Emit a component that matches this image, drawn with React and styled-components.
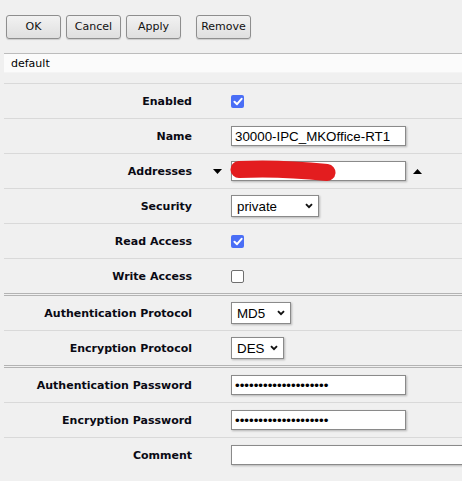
import React from "react";
import styled, { createGlobalStyle } from "styled-components";

const Global = createGlobalStyle`
  html, body { margin: 0; padding: 0; background: #f0f0f0; overflow: hidden; }
  body { font-family: "DejaVu Sans", Verdana, sans-serif; font-size: 11px; color: #000; }
`;

const Page = styled.div`
  width: 462px;
  height: 481px;
  overflow: hidden;
  background: #f0f0f0;
`;

const Toolbar = styled.div`
  display: flex;
  align-items: center;
  gap: 5px;
  padding: 8px 0 0 6px;
  height: 45px;
  box-sizing: border-box;
`;

const Button = styled.button`
  width: 55px;
  height: 24px;
  margin-left: ${(p) => (p.$spaced ? "10px" : "0")};
  box-sizing: border-box;
  border: 1px solid #8e8e8e;
  border-radius: 3px;
  background: linear-gradient(#f2f2f2, #dfdfdf);
  box-shadow: 0 1px 1px rgba(0, 0, 0, 0.15);
  font-family: "DejaVu Sans", Verdana, sans-serif;
  font-size: 11px;
  color: #111;
  padding: 0;
`;

const Band = styled.div`
  margin: 8px 0 0 4px;
  height: 20px;
  border-top: 1px solid #bcbcbc;
  border-bottom: 1px solid #f4f4f4;
  background: #fbfbfb;
  display: flex;
  align-items: center;
  padding-left: 7px;
  box-sizing: border-box;
  font-size: 11px;
`;

const Form = styled.div`
  margin: 10px 0 0 4px;
`;

const Row = styled.div`
  display: flex;
  align-items: center;
  height: 34px;
  border-top: ${(p) => (p.$group ? "3px double #b3b3b3" : "1px solid #d9d9d9")};
`;

const Label = styled.div`
  width: 188px;
  text-align: right;
  font-weight: bold;
  font-size: 11px;
  color: #0a0a14;
  flex: none;
`;

const Pre = styled.div`
  width: 39px;
  flex: none;
  display: flex;
  align-items: center;
  padding-left: 21px;
  box-sizing: border-box;
`;

const Check = styled.span`
  width: 13px;
  height: 13px;
  box-sizing: border-box;
  border-radius: 2px;
  display: inline-flex;
  align-items: center;
  justify-content: center;
  background: ${(p) => (p.$on ? "#4a6ef6" : "#fff")};
  border: ${(p) => (p.$on ? "none" : "1px solid #6f6f6f")};
`;

const Input = styled.input`
  width: ${(p) => p.$w || 175}px;
  height: 20px;
  box-sizing: border-box;
  border: 1px solid #8a8a8a;
  box-shadow: 1px 1px 2px rgba(0, 0, 0, 0.25);
  background: #fff;
  font-family: "Liberation Sans", Arial, sans-serif;
  font-size: 13.33px;
  color: #000;
  padding: 0 0 0 3px;
  margin: 0;
  outline: none;
  flex: none;
`;

const InputWrap = styled.div`
  position: relative;
  flex: none;
  display: flex;
`;

const Scribble = styled.svg`
  position: absolute;
  left: -2px;
  top: -2px;
  pointer-events: none;
`;

const After = styled.div`
  margin-left: 7px;
  display: flex;
  align-items: center;
`;

const SelectBox = styled.div`
  width: ${(p) => p.$w}px;
  height: 22px;
  box-sizing: border-box;
  border: 1px solid #8a8a8a;
  box-shadow: 1px 1px 2px rgba(0, 0, 0, 0.25);
  background: #fff;
  display: flex;
  align-items: center;
  justify-content: space-between;
  padding: 0 5px 0 5px;
  font-family: "Liberation Sans", Arial, sans-serif;
  font-size: 13.33px;
  color: #000;
  flex: none;
`;

const Tick = () => (
  <svg width="10" height="9" viewBox="0 0 10 9">
    <path d="M1.5 4.8 L4 7.2 L8.6 1.8" fill="none" stroke="#fff" strokeWidth="2" strokeLinecap="round" strokeLinejoin="round" />
  </svg>
);

const Chevron = () => (
  <svg width="8" height="6" viewBox="0 0 8 6">
    <path d="M1 1.2 L4 4.2 L7 1.2" fill="none" stroke="#111" strokeWidth="1.9" />
  </svg>
);

const Tri = ({ up }) => (
  <svg width="9" height="5" viewBox="0 0 9 5">
    <path d={up ? "M0 5 L4.5 0 L9 5 Z" : "M0 0 L9 0 L4.5 5 Z"} fill="#000" />
  </svg>
);

const Select = ({ w, value }) => (
  <SelectBox $w={w}>
    <span>{value}</span>
    <Chevron />
  </SelectBox>
);

const pw = "aaaaaaaaaaaaaaaaaaaa";

export default function App() {
  return (
    <Page>
      <Global />
      <Toolbar>
        <Button>OK</Button>
        <Button>Cancel</Button>
        <Button>Apply</Button>
        <Button $spaced>Remove</Button>
      </Toolbar>
      <Band>default</Band>
      <Form>
        <Row>
          <Label>Enabled</Label>
          <Pre />
          <Check $on><Tick /></Check>
        </Row>
        <Row>
          <Label>Name</Label>
          <Pre />
          <Input readOnly value="30000-IPC_MKOffice-RT1" />
        </Row>
        <Row>
          <Label>Addresses</Label>
          <Pre><Tri /></Pre>
          <InputWrap>
            <Input readOnly value="2" />
            <Scribble width="112" height="26" viewBox="0 0 112 26">
              <path d="M10 10.5 Q 50 8.5 98 13.5" fill="none" stroke="#e31d1f" strokeWidth="17" strokeLinecap="round" />
            </Scribble>
          </InputWrap>
          <After><Tri up /></After>
        </Row>
        <Row>
          <Label>Security</Label>
          <Pre />
          <Select w={88} value="private" />
        </Row>
        <Row>
          <Label>Read Access</Label>
          <Pre />
          <Check $on><Tick /></Check>
        </Row>
        <Row>
          <Label>Write Access</Label>
          <Pre />
          <Check />
        </Row>
        <Row $group>
          <Label>Authentication Protocol</Label>
          <Pre />
          <Select w={60} value="MD5" />
        </Row>
        <Row>
          <Label>Encryption Protocol</Label>
          <Pre />
          <Select w={53} value="DES" />
        </Row>
        <Row $group>
          <Label>Authentication Password</Label>
          <Pre />
          <Input type="password" readOnly value={pw} />
        </Row>
        <Row>
          <Label>Encryption Password</Label>
          <Pre />
          <Input type="password" readOnly value={pw} />
        </Row>
        <Row>
          <Label>Comment</Label>
          <Pre />
          <Input readOnly value="" $w={300} />
        </Row>
      </Form>
    </Page>
  );
}
